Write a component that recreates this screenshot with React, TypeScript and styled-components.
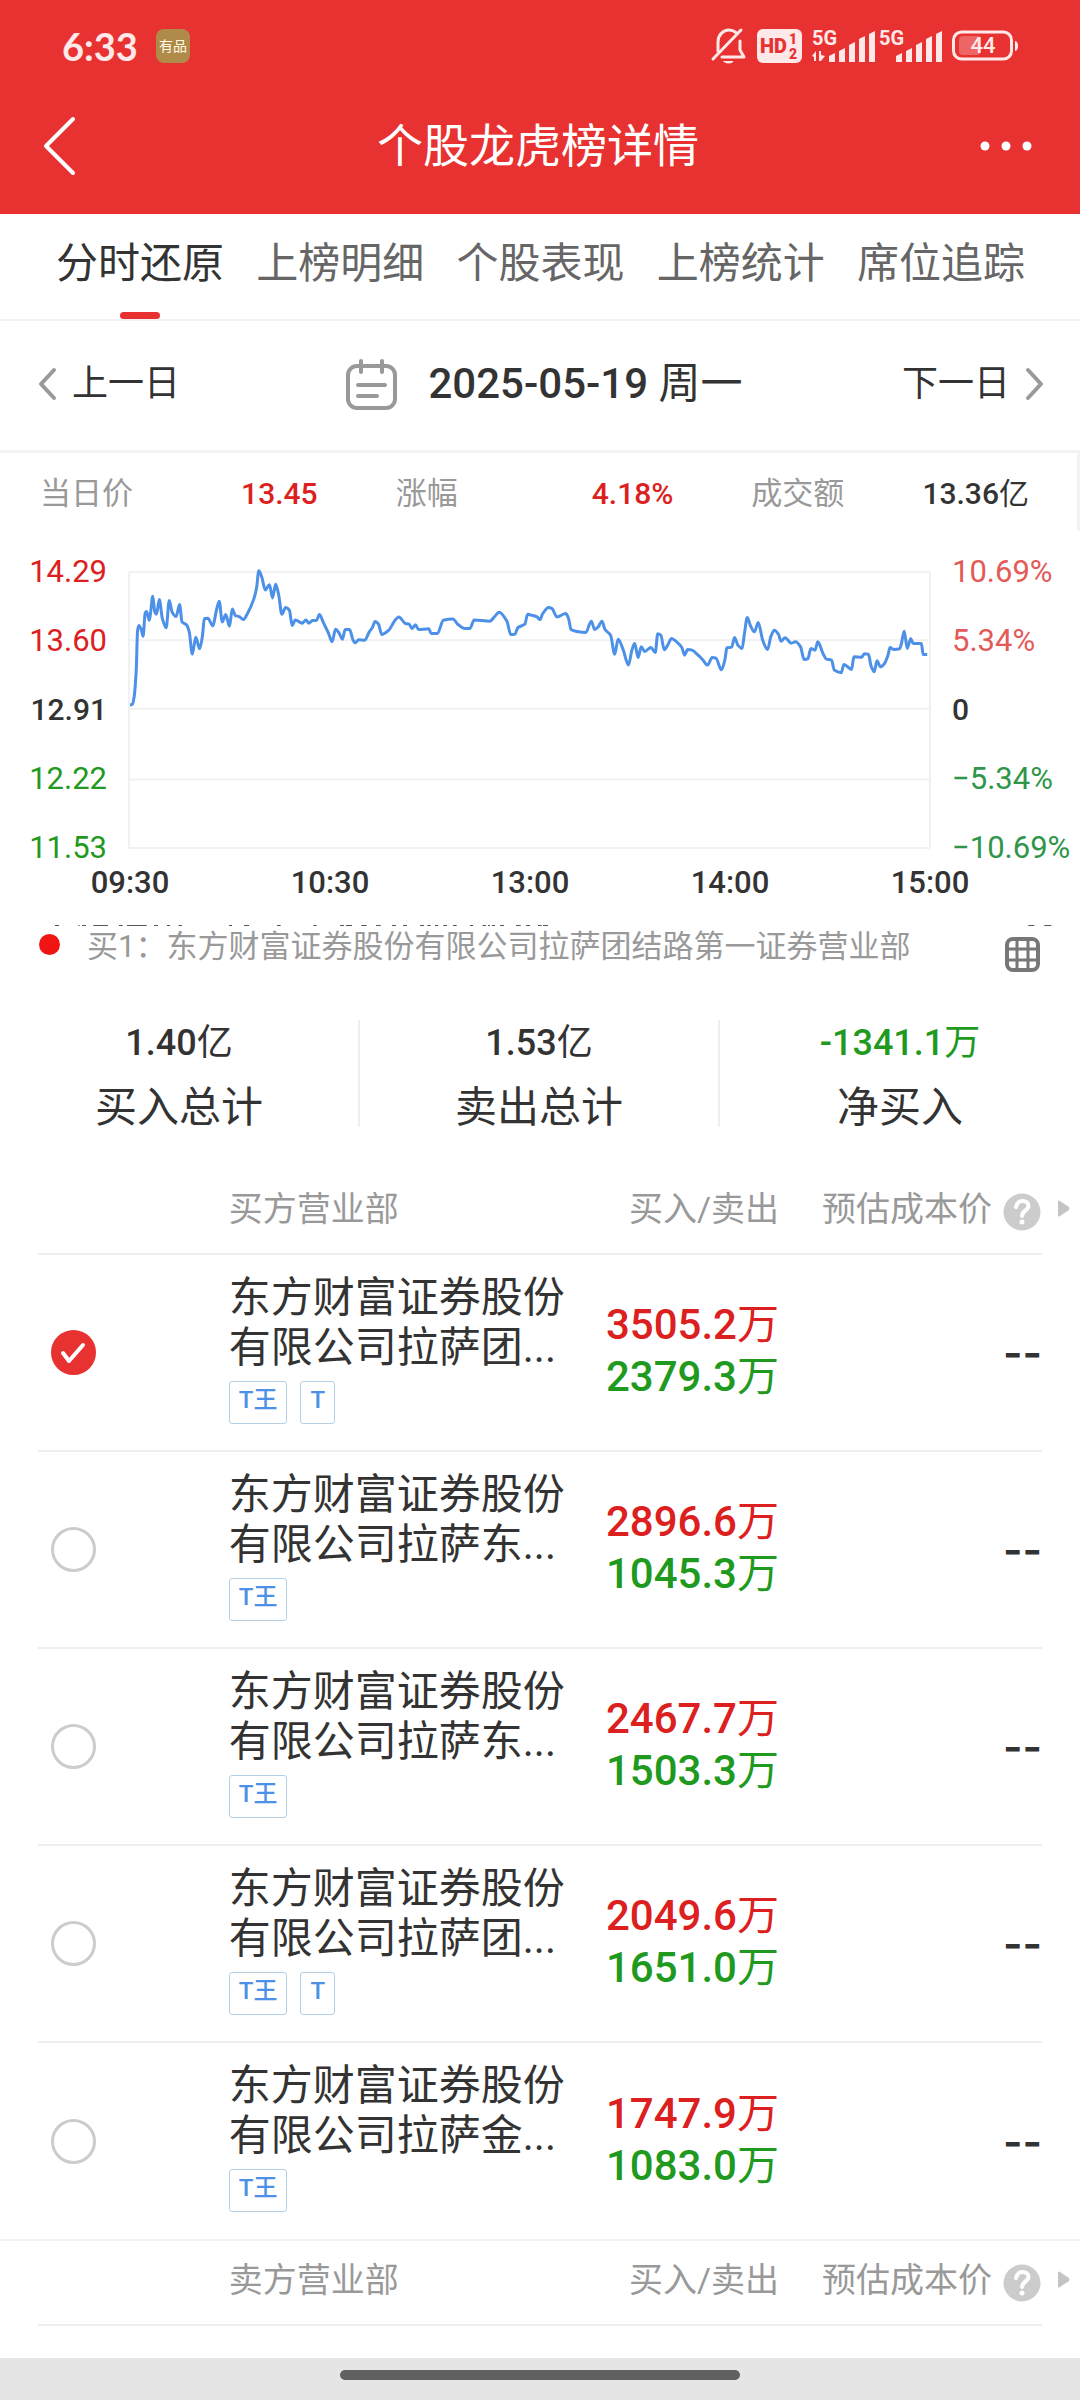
import React, { useState } from "react";
import styled, { createGlobalStyle } from "styled-components";

const color = {
  brand: "#e83232",
  up: "#dc2020",
  upSoft: "#e35a58",
  down: "#1f9a1f",
  downSoft: "#2f9549",
  ink: "#333333",
  sub: "#666666",
  mute: "#999999",
  line: "#eeeeee",
  band: "#f3f3f3",
  blue: "#4d90e8",
};

const GlobalStyle = createGlobalStyle`
  * { box-sizing: border-box; }
  body {
    margin: 0;
    background: #fff;
    color: ${color.ink};
    font-family: Roboto, "Noto Sans CJK SC", sans-serif;
    font-size: 31px;
  }
  button {
    border: 0;
    padding: 0;
    background: none;
    color: inherit;
    font: inherit;
    cursor: pointer;
  }
  svg { display: block; overflow: visible; }
`;

const Page = styled.div`
  display: flex;
  flex-direction: column;
  min-height: 100vh;
`;

/* ---------- header ---------- */

const Header = styled.header`
  background: ${color.brand};
  color: #fff;
`;

const StatusBar = styled.div`
  display: flex;
  align-items: center;
  justify-content: space-between;
  height: 92px;
  padding: 0 61px 0 62px;
  color: #ffe8e8;
`;

const StatusGroup = styled.div<{ $gap: number }>`
  display: flex;
  align-items: center;
  gap: ${(p) => p.$gap}px;
`;

const Clock = styled.span`
  font-family: Lato, sans-serif;
  font-size: 38px;
  font-weight: 700;
`;

const AppBadge = styled.span`
  display: grid;
  place-items: center;
  width: 34px;
  height: 34px;
  border-radius: 8px;
  background: #b08a48;
  color: #fffbe6;
  font-size: 14px;
  line-height: 16px;
`;

const TitleBar = styled.div`
  display: grid;
  grid-template-columns: 80px 1fr 80px;
  align-items: center;
  height: 122px;
  padding: 0 48px 14px 44px;
`;

const Title = styled.h1`
  margin: 0;
  font-size: 46px;
  font-weight: 400;
  line-height: 60px;
  text-align: center;
`;

const IconButton = styled.button<{ $align?: string }>`
  display: flex;
  justify-content: ${(p) => p.$align || "flex-start"};
`;

/* ---------- tabs and date ---------- */

const Tabs = styled.nav`
  display: grid;
  grid-template-columns: repeat(5, 1fr);
  height: 107px;
  padding: 0 39px 0 40px;
  border-bottom: 2px solid ${color.band};
`;

const Tab = styled.button<{ $active: boolean }>`
  display: flex;
  flex-direction: column;
  align-items: center;
  justify-content: space-between;
  padding-top: 24px;
  font-size: 42px;
  line-height: 52px;
  white-space: nowrap;
  color: ${(p) => (p.$active ? color.ink : color.sub)};

  &::after {
    content: "";
    width: 40px;
    height: 7px;
    border-radius: 4px;
    background: ${(p) => (p.$active ? color.brand : "transparent")};
  }
`;

const DateBar = styled.div`
  display: flex;
  align-items: center;
  justify-content: space-between;
  height: 132px;
  padding: 0 37px 3px 39px;
  border-bottom: 3px solid ${color.band};
`;

const DayButton = styled.button`
  display: flex;
  align-items: center;
  gap: 16px;
  font-size: 36px;
  line-height: 48px;

  svg { color: ${color.mute}; }
`;

const DateButton = styled.button`
  display: flex;
  align-items: center;
  gap: 32px;
  padding-left: 6px;
  font-size: 42px;
  font-weight: 500;
  line-height: 52px;
`;

const Weekday = styled.span`
  font-weight: 400;
`;

/* ---------- quote and chart ---------- */

const QuoteBar = styled.dl`
  display: grid;
  grid-template-columns: repeat(3, 1fr);
  column-gap: 78px;
  align-items: center;
  height: 78px;
  margin: 0;
  padding: 3px 48px 0 40px;
  border-right: 3px solid ${color.band};
`;

const QuoteItem = styled.div`
  display: flex;
  align-items: center;
  justify-content: space-between;
  line-height: 40px;
`;

const QuoteLabel = styled.dt`
  color: ${color.mute};
`;

const QuoteValue = styled.dd<{ $tone: string }>`
  margin: 0;
  font-size: 30px;
  font-weight: 500;
  color: ${(p) => p.$tone};
`;

const ChartBox = styled.section`
  display: grid;
  grid-template-columns: 107px 1fr 128px;
  column-gap: 22px;
  padding-top: 25px;
`;

const Axis = styled.div<{ $align: string }>`
  display: flex;
  flex-direction: column;
  justify-content: space-between;
  text-align: ${(p) => p.$align};
  line-height: 32px;
`;

const AxisLabel = styled.span<{ $tone: string; $strong?: boolean }>`
  color: ${(p) => p.$tone};
  font-size: ${(p) => (p.$strong ? 30 : 31)}px;
  font-weight: ${(p) => (p.$strong ? 500 : 400)};
`;

const Plot = styled.svg`
  width: 100%;
  height: 276px;
  margin: 16px 0;
`;

const TimeAxis = styled.div`
  display: grid;
  grid-template-columns: repeat(5, 1fr);
  padding: 3px 50px 0 30px;
  line-height: 32px;
  font-weight: 500;
  text-align: center;
`;

/* ---------- legend and totals ---------- */

const ClippedRow = styled.svg`
  width: calc(100% - 40px);
  height: 1px;
  margin: 26px 0 1px 40px;
`;

const Legend = styled.div`
  display: flex;
  align-items: flex-start;
  height: 56px;
  padding: 0 40px 0 39px;
  line-height: 40px;
  color: ${color.mute};
`;

const LegendDot = styled.span`
  width: 21px;
  height: 21px;
  margin: 7px 27px 0 0;
  border-radius: 50%;
  background: #f01414;
`;

const LegendText = styled.span`
  flex: 1;
  white-space: nowrap;
`;

const GridButton = styled.button`
  margin-top: 10px;
`;

const Totals = styled.div`
  display: grid;
  grid-template-columns: repeat(3, 1fr);
  padding: 37px 0 43px;
`;

const Total = styled.div`
  display: flex;
  flex-direction: column;
  align-items: center;
  gap: 23px;

  &:not(:last-child) {
    border-right: 2px solid ${color.line};
  }
`;

const TotalValue = styled.span<{ $tone: string }>`
  font-size: 36px;
  font-weight: 500;
  line-height: 46px;
  color: ${(p) => p.$tone};
`;

const TotalLabel = styled.span`
  font-size: 42px;
  line-height: 38px;
`;

/* ---------- seat tables ---------- */

const TableBlock = styled.section<{ $ruled?: boolean }>`
  padding: 0 38px;
  border-top: ${(p) => (p.$ruled ? `2px solid ${color.band}` : "0")};
`;

const SeatTable = styled.table`
  width: 100%;
  table-layout: fixed;
  border-collapse: collapse;
`;

const HeadRow = styled.tr`
  height: 84px;
  border-bottom: 2px solid ${color.line};
`;

const HeadCell = styled.th<{ $width: string; $align?: string }>`
  width: ${(p) => p.$width};
  padding: 0 0 6px;
  text-align: ${(p) => p.$align || "left"};
  font-size: 34px;
  font-weight: 400;
  line-height: 44px;
  white-space: nowrap;
  color: ${color.mute};
`;

const CostHead = styled.div`
  display: flex;
  align-items: center;
  justify-content: flex-end;
  margin-right: -28px;
`;

const HelpButton = styled.button`
  margin: 6px 17px 0 11px;
`;

const Row = styled.tr`
  height: 197px;

  & + & {
    border-top: 2px solid ${color.line};
  }
`;

const Cell = styled.td<{ $align?: string; $top?: boolean }>`
  padding: ${(p) => (p.$top ? "18px 0 0" : "0")};
  vertical-align: ${(p) => (p.$top ? "top" : "middle")};
  text-align: ${(p) => p.$align || "left"};
`;

const Tick = styled.input`
  appearance: none;
  display: block;
  width: 45px;
  height: 45px;
  margin: 0 0 0 13px;
  border: 3px solid #cccccc;
  border-radius: 50%;
  cursor: pointer;

  &:checked {
    border-color: ${color.brand};
    background: ${color.brand}
      url("data:image/svg+xml,%3Csvg xmlns='http://www.w3.org/2000/svg' viewBox='0 0 39 39' fill='none' stroke='white' stroke-width='4' stroke-linecap='round' stroke-linejoin='round'%3E%3Cpath d='M9 20l6 8 14-16'/%3E%3C/svg%3E")
      center / 39px 39px no-repeat;
  }
`;

const SeatName = styled.label`
  display: block;
  font-size: 42px;
  line-height: 50px;
`;

const TagList = styled.div`
  display: flex;
  gap: 13px;
  margin-top: 8px;
`;

const Tag = styled.span`
  height: 43px;
  padding: 0 9px;
  border: 1px solid #b4d0e6;
  border-radius: 3px;
  font-size: 24px;
  font-weight: 500;
  line-height: 37px;
  color: ${color.blue};
`;

const Amounts = styled.div`
  padding-bottom: 3px;
  font-size: 42px;
  font-weight: 500;
  line-height: 52px;
`;

const Amount = styled.div<{ $tone: string }>`
  color: ${(p) => p.$tone};
`;

const Unit = styled.span`
  font-weight: 400;
`;

const Cost = styled.span`
  font-family: Inter, sans-serif;
  font-size: 42px;
  font-weight: 600;
`;

const HomeBar = styled.footer`
  display: flex;
  justify-content: center;
  height: 42px;
  margin-top: auto;
  padding-top: 12px;
  background: #e5e5e5;
`;

const HomePill = styled.div`
  width: 37%;
  height: 10px;
  border-radius: 5px;
  background: #606060;
`;

/* ---------- drawings ---------- */

const BellOff = () => (
  <svg width="36" height="38" viewBox="0 0 36 38" fill="none" stroke="currentColor" strokeWidth="3" strokeLinecap="round" strokeLinejoin="round">
    <path d="M7 24V15C7 8 12 3 18 3c3 0 5 1 7 2.500M29 14v9l4 7H11" />
    <path d="M2 32L30 3" />
    <path d="M13 34.500h9c-1 2-8 2-9 0z" fill="currentColor" strokeWidth="1" />
  </svg>
);

const HdBadge = () => (
  <svg width="45" height="34" viewBox="0 0 45 34" fontFamily="Roboto, sans-serif" fontWeight="900">
    <rect width="45" height="34" rx="6" fill="currentColor" />
    <text x="3" y="24" fontSize="20" fill={color.brand}>HD</text>
    <text x="32" y="15" fontSize="14" fill={color.brand}>1</text>
    <text x="32" y="30" fontSize="14" fill={color.brand}>2</text>
  </svg>
);

const Signal = ({ data }: { data?: boolean }) => (
  <svg width="63" height="36" viewBox="0 0 63 36" fill="currentColor">
    <text x="0" y="17" fontFamily="Roboto, sans-serif" fontWeight="700" fontSize="20">5G</text>
    {data && <path d="M0 28l4-5v10H2v-4zM7 23h2v4l4 1-4 5H7z" />}
    {[8, 13, 19, 25, 30].map((h, i) => (
      <path key={h} d={`M${17 + i * 10} ${34 - h + 2}l6-3v${h + 1}h-6z`} />
    ))}
  </svg>
);

const Battery = () => (
  <svg width="67" height="32" viewBox="0 0 67 32">
    <rect x="1.500" y="2" width="58" height="27" rx="8" fill="none" stroke="currentColor" strokeWidth="3" />
    <path d="M63 11c4 0 4 10 0 10z" fill="currentColor" />
    <rect x="7" y="6" width="22" height="19" rx="4" fill="currentColor" opacity="0.28" />
    <text x="31" y="23" textAnchor="middle" fontFamily="Roboto, sans-serif" fontWeight="500" fontSize="22" fill="currentColor">44</text>
  </svg>
);

const Chevron = ({ w, h, stroke, flip }: { w: number; h: number; stroke: number; flip?: boolean }) => {
  const s = stroke / 2;
  const [near, far] = flip ? [w - s, s] : [s, w - s];
  return (
    <svg width={w} height={h} fill="none" stroke="currentColor" strokeWidth={stroke} strokeLinecap="round" strokeLinejoin="round">
      <path d={`M${far} ${s}L${near} ${h / 2}L${far} ${h - s}`} />
    </svg>
  );
};

const MoreDots = () => (
  <svg width="52" height="10" fill="currentColor">
    <circle cx="5" cy="5" r="4.500" />
    <circle cx="26" cy="5" r="4.500" />
    <circle cx="47" cy="5" r="4.500" />
  </svg>
);

const CalendarIcon = () => (
  <svg width="51" height="51" viewBox="0 0 51 51" fill="none" stroke={color.mute} strokeWidth="4" strokeLinecap="round">
    <rect x="2" y="7" width="47" height="42" rx="9" />
    <path d="M15 2v11M36 2v11M12 26h27M12 37h19" />
  </svg>
);

const GridIcon = () => (
  <svg width="35" height="35" viewBox="0 0 35 35" fill="none" stroke="#777777" strokeWidth="4">
    <rect x="2" y="2" width="31" height="31" rx="6" />
    <path d="M12 2v31M23 2v31M2 12h31M2 23h31" strokeWidth="3" />
  </svg>
);

const HelpIcon = () => (
  <svg width="38" height="38" viewBox="0 0 38 38">
    <circle cx="19" cy="19" r="18.500" fill="#cccccc" />
    <path d="M13 14c1-4 3-6 6.500-6s6 2 6 5c0 4-6.500 5-6.500 10" fill="none" stroke="#fff" strokeWidth="4" strokeLinecap="round" />
    <circle cx="19" cy="29" r="2.500" fill="#fff" />
  </svg>
);

const MoreColumns = () => (
  <svg width="12" height="17" viewBox="0 0 12 17" fill="#c4c4c4">
    <path d="M0 1q1-1 2 0l9 6q1 1.500 0 3l-9 6q-1 1-2 0z" />
  </svg>
);

/* ---------- price curve ---------- */

const prices = [
  380, 495, 387, 492, 392, 470, 398, 390, 402, 270, 406, 256, 412, 266, 418, 288, 424, 218, 428, 214, 436, 240,
  440, 215, 446, 168, 452, 215, 457, 222, 465, 178, 474, 235, 485, 263, 494, 181, 502, 215, 514, 229, 524, 193,
  531, 245, 545, 255, 552, 275, 561, 342, 571, 291, 582, 326, 590, 290, 596, 235, 606, 234, 621, 257, 630, 215,
  639, 183, 648, 245, 658, 223, 669, 258, 677, 206, 686, 226, 697, 229, 709, 238, 722, 218, 740, 175, 748, 140,
  754, 91, 762, 108, 773, 149, 785, 133, 794, 173, 803, 132, 812, 165, 821, 222, 832, 202, 843, 210, 851, 256,
  860, 239, 880, 249, 891, 239, 899, 249, 910, 241, 922, 240, 930, 223, 942, 248, 957, 280, 967, 305, 977, 267,
  987, 278, 997, 297, 1005, 268, 1018, 268, 1028, 300, 1034, 308, 1044, 299, 1062, 300, 1075, 275, 1084, 262,
  1092, 244, 1102, 252, 1111, 283, 1132, 270, 1148, 243, 1161, 230, 1180, 250, 1191, 252, 1199, 265, 1209, 254,
  1218, 268, 1248, 266, 1255, 280, 1273, 280, 1290, 240, 1318, 236, 1332, 252, 1352, 265, 1367, 265, 1380, 239,
  1425, 243, 1440, 228, 1452, 216, 1475, 243, 1486, 283, 1498, 282, 1507, 262, 1527, 252, 1535, 222, 1550, 226,
  1562, 230, 1571, 238, 1578, 222, 1596, 202, 1606, 205, 1620, 230, 1646, 220, 1654, 235, 1661, 268, 1678, 274,
  1704, 277, 1720, 243, 1730, 268, 1740, 260, 1751, 243, 1760, 268, 1776, 285, 1788, 342, 1798, 297, 1813, 330,
  1828, 375, 1838, 330, 1846, 310, 1856, 352, 1865, 320, 1875, 334, 1893, 322, 1906, 337, 1913, 281, 1922, 285,
  1932, 329, 1942, 315, 1953, 295, 1968, 305, 1983, 322, 1991, 345, 2000, 328, 2013, 330, 2028, 343, 2043, 358,
  2058, 375, 2071, 352, 2082, 354, 2098, 389, 2108, 360, 2114, 323, 2128, 321, 2136, 292, 2146, 315, 2158, 325,
  2165, 280, 2173, 232, 2183, 258, 2194, 275, 2205, 247, 2218, 300, 2232, 328, 2242, 288, 2252, 270, 2264, 283,
  2271, 303, 2283, 293, 2301, 309, 2313, 305, 2328, 320, 2338, 358, 2349, 356, 2358, 325, 2370, 330, 2378, 305,
  2393, 340, 2403, 357, 2418, 360, 2426, 390, 2446, 398, 2454, 373, 2476, 388, 2483, 350, 2506, 351, 2513, 341,
  2525, 342, 2533, 378, 2542, 395, 2550, 362, 2560, 380, 2572, 370, 2582, 345, 2588, 322, 2598, 328, 2616, 326,
  2621, 310, 2629, 273, 2638, 325, 2648, 295, 2655, 310, 2679, 310, 2684, 343, 2696, 343,
];

/** Monotone cubic path: smooth between samples and never past a peak. */
function smoothPath(flat: number[]): string {
  const n = flat.length / 2;
  const x = (i: number) => flat[i * 2];
  const y = (i: number) => flat[i * 2 + 1];
  const slope = (i: number) => (y(i + 1) - y(i)) / (x(i + 1) - x(i));
  const tangent = (i: number) => {
    if (i === 0 || i === n - 1) return 0;
    const a = slope(i - 1);
    const b = slope(i);
    return a * b <= 0 ? 0 : (2 * a * b) / (a + b);
  };
  let d = `M${x(0)} ${y(0)}`;
  for (let i = 0; i < n - 1; i++) {
    const h = (x(i + 1) - x(i)) / 3;
    d += `C${x(i) + h} ${y(i) + tangent(i) * h} ${x(i + 1) - h} ${y(i + 1) - tangent(i + 1) * h} ${x(i + 1)} ${y(i + 1)}`;
  }
  return d;
}

const curve = smoothPath(prices);

const clippedMarks =
  "M45 1H57M115 1h4M126 1h12M160 1h44M237 1h11M261 1h59M342 1h12M381 1h9M416 1h10M567 1h9M612 1h15M711 1h11M820 1h10M900 1h12M918 1h18M964 1h16M1008 1h14M1056 1h12M1089 1h12M1140 1h12M1162 1h10M1185 1h9M1210 1h11M1239 1h11M1290 1h9M1328 1h10M1344 1h6M1356 1h9M1380 1h12M1428 1h14M1458 1h12M1494 1h11M1509 1h15M2965 1h18M3013 1h21";

/* ---------- data ---------- */

const tabs = ["分时还原", "上榜明细", "个股表现", "上榜统计", "席位追踪"];

const buyers = [
  { name: "东方财富证券股份有限公司拉萨团...", tags: ["T王", "T"], buy: "3505.2", sell: "2379.3" },
  { name: "东方财富证券股份有限公司拉萨东...", tags: ["T王"], buy: "2896.6", sell: "1045.3" },
  { name: "东方财富证券股份有限公司拉萨东...", tags: ["T王"], buy: "2467.7", sell: "1503.3" },
  { name: "东方财富证券股份有限公司拉萨团...", tags: ["T王", "T"], buy: "2049.6", sell: "1651.0" },
  { name: "东方财富证券股份有限公司拉萨金...", tags: ["T王"], buy: "1747.9", sell: "1083.0" },
];

const SeatHead = ({ side }: { side: string }) => (
  <thead>
    <HeadRow>
      <HeadCell as="td" $width="19%" />
      <HeadCell $width="33.6%">{side}</HeadCell>
      <HeadCell $width="21.2%" $align="right">买入/卖出</HeadCell>
      <HeadCell $width="26.2%">
        <CostHead>
          预估成本价
          <HelpButton aria-label="预估成本价说明"><HelpIcon /></HelpButton>
          <MoreColumns />
        </CostHead>
      </HeadCell>
    </HeadRow>
  </thead>
);

export default function App() {
  const [tab, setTab] = useState(0);
  const [picked, setPicked] = useState<number[]>([0]);
  const toggle = (i: number) =>
    setPicked((p) => (p.includes(i) ? p.filter((k) => k !== i) : [...p, i]));

  return (
    <Page>
      <GlobalStyle />
      <Header>
        <StatusBar>
          <StatusGroup $gap={18}>
            <Clock>6:33</Clock>
            <AppBadge>有品</AppBadge>
          </StatusGroup>
          <StatusGroup $gap={10}>
            <BellOff />
            <HdBadge />
            <StatusGroup $gap={4}>
              <Signal data />
              <Signal />
            </StatusGroup>
            <Battery />
          </StatusGroup>
        </StatusBar>
        <TitleBar>
          <IconButton aria-label="返回"><Chevron w={31} h={58} stroke={4} /></IconButton>
          <Title>个股龙虎榜详情</Title>
          <IconButton aria-label="更多" $align="flex-end"><MoreDots /></IconButton>
        </TitleBar>
      </Header>

      <Tabs>
        {tabs.map((t, i) => (
          <Tab key={t} $active={tab === i} onClick={() => setTab(i)}>{t}</Tab>
        ))}
      </Tabs>

      <DateBar>
        <DayButton>
          <Chevron w={17} h={32} stroke={4} />
          上一日
        </DayButton>
        <DateButton>
          <CalendarIcon />
          <span>2025-05-19 <Weekday>周一</Weekday></span>
        </DateButton>
        <DayButton>
          下一日
          <Chevron w={17} h={32} stroke={4} flip />
        </DayButton>
      </DateBar>

      <QuoteBar>
        <QuoteItem>
          <QuoteLabel>当日价</QuoteLabel>
          <QuoteValue $tone={color.up}>13.45</QuoteValue>
        </QuoteItem>
        <QuoteItem>
          <QuoteLabel>涨幅</QuoteLabel>
          <QuoteValue $tone={color.up}>4.18%</QuoteValue>
        </QuoteItem>
        <QuoteItem>
          <QuoteLabel>成交额</QuoteLabel>
          <QuoteValue $tone={color.ink}>13.36<Unit>亿</Unit></QuoteValue>
        </QuoteItem>
      </QuoteBar>

      <ChartBox>
        <Axis $align="right">
          <AxisLabel $tone={color.up}>14.29</AxisLabel>
          <AxisLabel $tone={color.up}>13.60</AxisLabel>
          <AxisLabel $tone={color.ink} $strong>12.91</AxisLabel>
          <AxisLabel $tone={color.down}>12.22</AxisLabel>
          <AxisLabel $tone={color.down}>11.53</AxisLabel>
        </Axis>
        <Plot viewBox="377 95 2327 830" preserveAspectRatio="none" fill="none">
          <path
            d="M377 95H2704M377 300H2704M377 506H2704M377 719H2704M377 925H2704M377 95V925M2704 95V925"
            stroke="#f1f1f1"
            strokeWidth="2"
            vectorEffect="non-scaling-stroke"
          />
          <path d={curve} stroke={color.blue} strokeWidth="3" strokeLinejoin="round" vectorEffect="non-scaling-stroke" />
        </Plot>
        <Axis $align="left">
          <AxisLabel $tone={color.upSoft}>10.69%</AxisLabel>
          <AxisLabel $tone={color.upSoft}>5.34%</AxisLabel>
          <AxisLabel $tone={color.ink} $strong>0</AxisLabel>
          <AxisLabel $tone={color.downSoft}>−5.34%</AxisLabel>
          <AxisLabel $tone={color.downSoft}>−10.69%</AxisLabel>
        </Axis>
      </ChartBox>
      <TimeAxis>
        <span>09:30</span>
        <span>10:30</span>
        <span>13:00</span>
        <span>14:00</span>
        <span>15:00</span>
      </TimeAxis>

      <ClippedRow viewBox="0 0 3120 2" preserveAspectRatio="none">
        <path d={clippedMarks} stroke={color.ink} strokeWidth="2" />
      </ClippedRow>
      <Legend>
        <LegendDot />
        <LegendText>买1：东方财富证券股份有限公司拉萨团结路第一证券营业部</LegendText>
        <GridButton aria-label="表格"><GridIcon /></GridButton>
      </Legend>

      <Totals>
        <Total>
          <TotalValue $tone={color.ink}>1.40<Unit>亿</Unit></TotalValue>
          <TotalLabel>买入总计</TotalLabel>
        </Total>
        <Total>
          <TotalValue $tone={color.ink}>1.53<Unit>亿</Unit></TotalValue>
          <TotalLabel>卖出总计</TotalLabel>
        </Total>
        <Total>
          <TotalValue $tone={color.down}>-1341.1<Unit>万</Unit></TotalValue>
          <TotalLabel>净买入</TotalLabel>
        </Total>
      </Totals>

      <TableBlock>
        <SeatTable>
          <SeatHead side="买方营业部" />
          <tbody>
            {buyers.map((b, i) => (
              <Row key={b.buy}>
                <Cell>
                  <Tick type="checkbox" id={`seat-${i}`} checked={picked.includes(i)} onChange={() => toggle(i)} />
                </Cell>
                <Cell $top>
                  <SeatName htmlFor={`seat-${i}`}>{b.name}</SeatName>
                  <TagList>
                    {b.tags.map((t) => <Tag key={t}>{t}</Tag>)}
                  </TagList>
                </Cell>
                <Cell $align="right">
                  <Amounts>
                    <Amount $tone={color.up}>{b.buy}<Unit>万</Unit></Amount>
                    <Amount $tone={color.down}>{b.sell}<Unit>万</Unit></Amount>
                  </Amounts>
                </Cell>
                <Cell $align="right"><Cost>--</Cost></Cell>
              </Row>
            ))}
          </tbody>
        </SeatTable>
      </TableBlock>

      <TableBlock $ruled>
        <SeatTable>
          <SeatHead side="卖方营业部" />
        </SeatTable>
      </TableBlock>

      <HomeBar><HomePill /></HomeBar>
    </Page>
  );
}
